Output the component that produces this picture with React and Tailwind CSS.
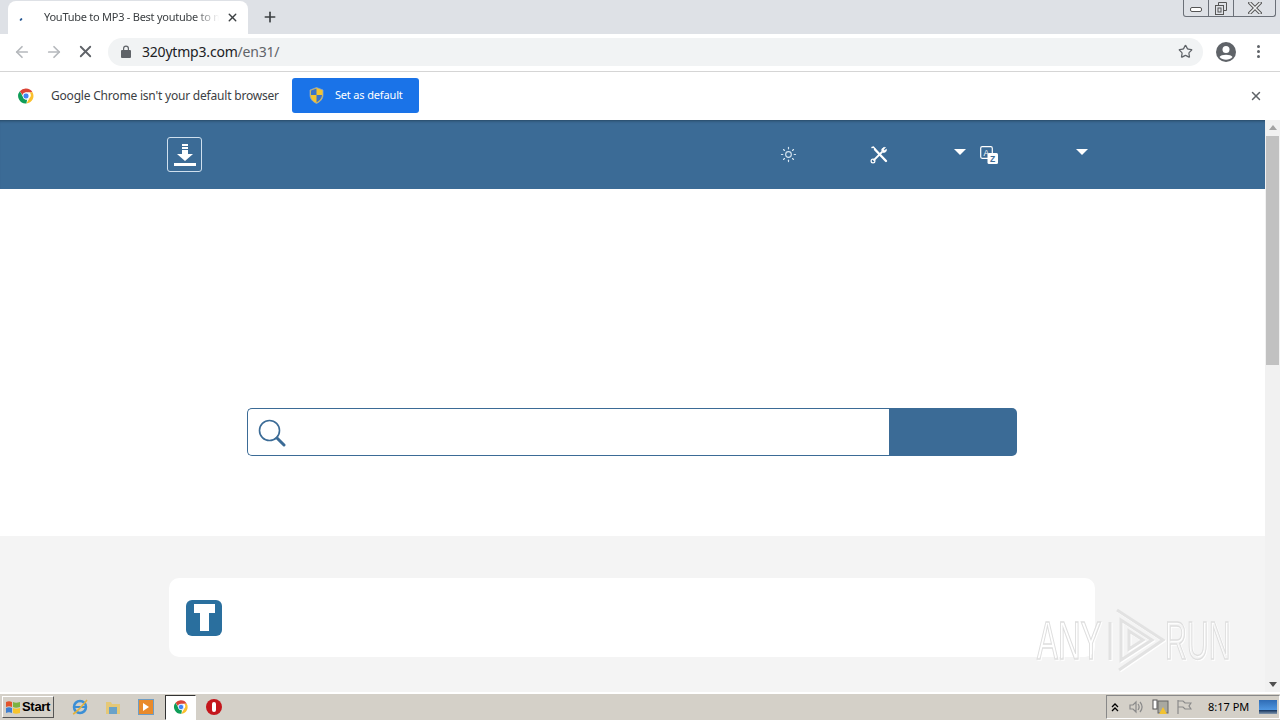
import { ArrowLeft, ArrowRight, X, Plus, Star, Sun } from "lucide-react";

function ChromeLogo({ size = 18 }) {
  return (
    <svg width={size} height={size} viewBox="0 0 48 48">
      <path d="M24 4a20 20 0 0 1 17.3 10H24a10 10 0 0 0-9.6 7.2L7.6 11.5A20 20 0 0 1 24 4z" fill="#db4437" />
      <path d="M41.3 14A20 20 0 0 1 25 44l8.5-14.5A10 10 0 0 0 33 14z" fill="#fbc02d" />
      <path d="M25 44A20 20 0 0 1 7.6 11.5L16 26a10 10 0 0 0 11 7.6z" fill="#0f9d58" />
      <circle cx="24" cy="24" r="8" fill="#4285f4" stroke="#fff" strokeWidth="2" />
    </svg>
  );
}

function Shield() {
  return (
    <svg width="15" height="17" viewBox="0 0 15 17">
      <path d="M7.5 0.5L14 3v5c0 4-3 7-6.500 8.500C4 15 1 12 1 8V3z" fill="#f4c430" stroke="#8aa4c8" strokeWidth="0.8" />
      <path d="M7.500 1.500V8H2V3.500z" fill="#3c74c8" />
      <path d="M7.500 8H13c0 3-2.500 6-5.500 7.500z" fill="#3c74c8" />
    </svg>
  );
}

function TabStrip() {
  return (
    <div className="flex h-[34px] bg-[#dee1e6]">
      <div className="ml-2 mt-[1px] flex h-[33px] w-[240px] items-center rounded-t-lg bg-white pl-[12px] pr-[8px]">
        <span className="mt-[3px] h-[3px] w-[2px] rotate-45 rounded-full bg-[#2a5a96]" />
        <span className="ml-[22px] w-[177px] overflow-hidden whitespace-nowrap text-[11px] tracking-[-0.25px] text-[#3c4043] [mask-image:linear-gradient(to_right,black_150px,transparent_175px)]">
          YouTube to MP3 - Best youtube to mp3
        </span>
        <X size={13} strokeWidth={2.5} className="ml-[5px] text-[#3c4043]" />
      </div>
      <Plus size={16} strokeWidth={2.5} className="ml-[14px] mt-[9px] text-[#3c4043]" />
      <div className="ml-auto mr-[4px] flex h-[17px] w-[93px] rounded-b-[3px] border border-t-0 border-[#6b7078] bg-[#dee1e6]">
        <div className="flex w-[25px] items-center justify-center border-r border-[#6b7078]">
          <span className="mt-[3px] h-[5px] w-[12px] rounded-[2px] border border-[#555] bg-white" />
        </div>
        <div className="flex w-[25px] items-center justify-center border-r border-[#6b7078]">
          <svg width="12" height="13" viewBox="0 0 12 13" fill="none" stroke="#555">
            <path d="M3.500 3V.5h8v8H9" />
            <rect x="0.500" y="3.500" width="8" height="9" />
            <rect x="3" y="6" width="3" height="4" />
          </svg>
        </div>
        <div className="flex flex-1 items-center justify-center">
          <svg width="14" height="12" viewBox="0 0 14 12" fill="none" strokeLinecap="square">
            <path d="M2 1l10 10M12 1L2 11" stroke="#555" strokeWidth="3.500" />
            <path d="M2 1l10 10M12 1L2 11" stroke="#eef0f2" strokeWidth="1.500" />
          </svg>
        </div>
      </div>
    </div>
  );
}

function Toolbar() {
  return (
    <div className="flex h-[38px] items-center border-b border-[#d5d5d5] bg-white pb-[2px]">
      <ArrowLeft size={18} strokeWidth={2.3} className="ml-[13px] text-[#b5b8bc]" />
      <ArrowRight size={18} strokeWidth={2.3} className="ml-[14px] text-[#b5b8bc]" />
      <X size={19} strokeWidth={2.3} className="ml-[13px] text-[#5f6368]" />
      <div className="ml-[13px] flex h-[28px] w-[1095px] items-center rounded-full bg-[#f1f3f4] pl-[12px] pr-[10px]">
        <svg width="12" height="13" viewBox="0 0 12 13" fill="#5f6368">
          <rect x="1" y="5" width="10" height="8" rx="1" />
          <path d="M3 5V3.500a3 3 0 0 1 6 0V5H7.800V3.500a1.800 1.800 0 0 0-3.600 0V5z" />
        </svg>
        <span className="ml-[10px] text-[14px] tracking-[-0.2px] text-[#202124]">
          320ytmp3.com<span className="text-[#5f6368]">/en31/</span>
        </span>
        <Star size={15} strokeWidth={2} className="ml-auto text-[#5f6368]" />
      </div>
      <svg width="20" height="20" viewBox="0 0 20 20" className="ml-[13px]">
        <circle cx="10" cy="10" r="10" fill="#5f6368" />
        <circle cx="10" cy="7.500" r="3.500" fill="#fff" />
        <path d="M3.500 15c1.500-3 11.500-3 13 0-3 3.500-10 3.500-13 0z" fill="#fff" />
      </svg>
      <div className="ml-[21px] flex flex-col gap-[2px]">
        <span className="h-[3px] w-[3px] rounded-full bg-[#5f6368]" />
        <span className="h-[3px] w-[3px] rounded-full bg-[#5f6368]" />
        <span className="h-[3px] w-[3px] rounded-full bg-[#5f6368]" />
      </div>
    </div>
  );
}

function Infobar() {
  return (
    <div className="flex h-[48px] items-center bg-white">
      <span className="ml-[17px]">
        <ChromeLogo />
      </span>
      <span className="ml-[16px] text-[12px] tracking-[-0.2px] text-[#3c4043]">Google Chrome isn't your default browser</span>
      <button className="mb-[2px] ml-[13px] flex h-[35px] w-[127px] items-center rounded-[3px] bg-[#1a73e8] pl-[17px] text-[11px] tracking-[-0.15px] text-white">
        <Shield />
        <span className="ml-[11px]">Set as default</span>
      </button>
      <X size={14} strokeWidth={2.5} className="ml-auto mr-[17px] text-[#5f6368]" />
    </div>
  );
}

function SiteHeader() {
  return (
    <header className="flex h-[69px] items-center bg-[#3b6b96] pl-[167px] shadow-[inset_0_3px_3px_-2px_rgba(0,0,0,0.35)]">
      <div className="flex h-[35px] w-[35px] flex-col items-center justify-center rounded-[3px] border border-[#cfe0ee]">
        <svg width="22" height="24" viewBox="0 0 22 24">
          <path d="M8 1h6v2H8zM8 4h6v2H8zM8 7h6v4h5l-8 7-8-7h5z" fill="#fff" />
          <rect x="0" y="20" width="22" height="3" fill="#fff" />
        </svg>
      </div>
      <Sun size={17} strokeWidth={1.6} className="ml-[578px] text-[#d6e6f2]" />
      <svg width="18" height="18" viewBox="0 0 18 18" className="ml-[73px]" fill="none" stroke="#fff" strokeLinecap="round">
        <path d="M2 1.500l1.500-.5 2 2.500" strokeWidth="1.400" />
        <path d="M5 3.500L16 15" strokeWidth="2.400" />
        <path d="M4 14L12 6" strokeWidth="1.800" />
        <circle cx="3" cy="15" r="1.900" strokeWidth="1.200" />
        <path d="M11.500 4c.5-2 2.300-3 4-2.500l-1.800 1.800.9 1.100 1.900-1.200c.4 2-1.200 3.800-3.400 3.300z" fill="#fff" strokeWidth="0.600" />
      </svg>
      <span className="mb-[5px] ml-[66px] h-0 w-0 border-x-[6px] border-t-[6px] border-x-transparent border-t-white" />
      <svg width="18" height="18" viewBox="0 0 18 18" className="ml-[14px]">
        <rect x="0.700" y="0.700" width="11.600" height="11.600" rx="1.500" fill="none" stroke="#fff" strokeWidth="1.200" />
        <text x="6.300" y="9.500" textAnchor="middle" fontSize="8.500" fontFamily="Liberation Sans, sans-serif" fill="#fff">A</text>
        <rect x="7.500" y="7" width="10.500" height="11" rx="1.500" fill="#fff" />
        <text x="12.700" y="15.800" textAnchor="middle" fontSize="8.500" fontWeight="700" fontFamily="Liberation Sans, sans-serif" fill="#3b6b96">Z</text>
      </svg>
      <span className="mb-[5px] ml-[78px] h-0 w-0 border-x-[6px] border-t-[6px] border-x-transparent border-t-white" />
    </header>
  );
}

function SearchBox() {
  return (
    <section className="flex h-[347px] items-start justify-center bg-white pt-[219px] pr-[1px]">
      <div className="flex h-[48px] w-[770px]">
        <div className="flex flex-1 items-center rounded-l-[5px] border border-r-0 border-[#3b6b96] bg-white pl-[10px]">
          <svg width="28" height="28" viewBox="0 0 28 28" fill="none" stroke="#3b6b96" className="mt-[2px]">
            <circle cx="11.500" cy="11.500" r="10" strokeWidth="1.600" />
            <path d="M19 19l7 7" strokeWidth="3" strokeLinecap="round" />
          </svg>
        </div>
        <button className="w-[128px] rounded-r-[5px] bg-[#3b6b96]" />
      </div>
    </section>
  );
}

function ToolsCard() {
  return (
    <section className="h-[156px] bg-[#f4f4f4] pl-[169px] pt-[42px]">
      <div className="flex h-[79px] w-[926px] items-center rounded-[10px] bg-white pl-[17px]">
        <div className="flex h-[36px] w-[36px] items-center justify-center rounded-[6px] bg-[#2a6f9e]">
          <svg width="21" height="27" viewBox="0 0 21 27">
            <path d="M0 0h21v9h-6v18H6V9H0z" fill="#fff" />
          </svg>
        </div>
      </div>
    </section>
  );
}

function Scrollbar() {
  return (
    <div className="flex w-[15px] flex-col items-center bg-[#f1f1f1]">
      <span className="mt-[5px] h-0 w-0 border-x-[4px] border-b-[5px] border-x-transparent border-b-[#a3a3a3]" />
      <div className="mt-[6px] h-[229px] w-full border-x border-[#f1f1f1] bg-[#c1c1c1]" />
      <span className="mb-[5px] mt-auto h-0 w-0 border-x-[4px] border-t-[5px] border-x-transparent border-t-[#505050]" />
    </div>
  );
}

function Watermark() {
  return (
    <div className="pointer-events-none absolute left-[1037px] top-[608px] flex items-center font-['Liberation_Sans',sans-serif] text-[54px] leading-none text-transparent drop-shadow-[1px_1px_0_#ffffff] [-webkit-text-stroke:1.500px_#dedede]">
      <span className="w-[68px] origin-left scale-x-[0.58]">ANY</span>
      <svg width="60" height="64" viewBox="0 0 60 64" fill="none" stroke="#e2e2e2" strokeWidth="3">
        <path d="M5 14v38M12 2l46 30-44 30" />
        <path d="M16 12v40l31-20z" />
        <path d="M24 23v18l14-9z" />
      </svg>
      <span className="w-[68px] origin-left scale-x-[0.56]">RUN</span>
    </div>
  );
}

function Taskbar() {
  return (
    <div className="flex h-[28px] items-center border-t-2 border-white bg-[#d4d0c8]">
      <button className="ml-[2px] flex h-[22px] w-[52px] items-center border border-[#555] border-l-white border-t-white bg-[#d4d0c8] pl-[2px] font-['Liberation_Sans',sans-serif] text-[13px] font-bold tracking-[-0.3px] text-black">
        <svg width="16" height="15" viewBox="0 0 16 15">
          <path d="M1 2c2-1 4-1 6 0v5c-2-1-4-1-6 0z" fill="#e2542c" />
          <path d="M8 2c2 1 4 1 7 0v5c-3 1-5 1-7 0z" fill="#7cb342" />
          <path d="M1 8c2-1 4-1 6 0v5c-2-1-4-1-6 0z" fill="#3f7fd0" />
          <path d="M8 8c2 1 4 1 7 0v5c-3 1-5 1-7 0z" fill="#f7c42c" />
        </svg>
        <span className="ml-[1px]">Start</span>
      </button>
      <svg width="18" height="18" viewBox="0 0 18 18" className="ml-[17px]">
        <circle cx="9" cy="9" r="6" fill="none" stroke="#3b8fd6" strokeWidth="2.500" />
        <rect x="4" y="8" width="11" height="2" fill="#3b8fd6" />
        <path d="M2 16C5 15 13 6 16 2" stroke="#e3b23c" strokeWidth="1.500" fill="none" />
      </svg>
      <svg width="18" height="18" viewBox="0 0 18 18" className="ml-[15px]">
        <path d="M2 4h5l1 2h8v10H2z" fill="#e5c877" />
        <rect x="5" y="9" width="8" height="7" fill="#6aa2c8" />
      </svg>
      <div className="ml-[16px] flex h-[16px] w-[16px] items-center justify-center border border-[#6d9dc5] bg-[#e98a2a]">
        <span className="h-0 w-0 border-y-[4px] border-l-[6px] border-y-transparent border-l-white" />
      </div>
      <div className="ml-[11px] flex h-[25px] w-[31px] items-center justify-center border border-[#333] border-b-white border-r-white bg-white">
        <ChromeLogo size={16} />
      </div>
      <div className="ml-[10px] flex h-[16px] w-[16px] items-center justify-center rounded-full bg-[#c4161c]">
        <span className="h-[10px] w-[4px] rounded-full bg-white" />
      </div>
      <div className="ml-auto flex h-[24px] w-[174px] items-center border border-[#888] border-b-white border-r-white">
        <svg width="8" height="9" viewBox="0 0 8 9" fill="none" stroke="#000" strokeWidth="1.300" className="ml-[4px]">
          <path d="M1 4l3-3 3 3M1 8l3-3 3 3" />
        </svg>
        <svg width="16" height="16" viewBox="0 0 16 16" className="ml-[9px]" fill="none" stroke="#8a8a8a" strokeWidth="1.200">
          <path d="M2 6h3l3-3v10l-3-3H2zM10 5c1.500 2 1.500 4 0 6M12 3c2.500 3 2.500 7 0 10" />
        </svg>
        <svg width="18" height="18" viewBox="0 0 18 18" className="ml-[7px]">
          <rect x="7" y="3" width="10" height="12" fill="#a8a8a0" stroke="#666" />
          <rect x="2" y="2" width="4" height="9" fill="#fff" stroke="#555" />
          <path d="M12 9l4 7H8z" fill="#f2c230" />
        </svg>
        <svg width="16" height="16" viewBox="0 0 16 16" className="ml-[7px]" fill="none" stroke="#8a8a8a" strokeWidth="1.200">
          <path d="M2 1v14M2 2h5l2 2h6l-2 3 2 3H9L7 8H2" />
        </svg>
        <span className="ml-[16px] text-[11px] text-black">8:17 PM</span>
        <div className="ml-auto mr-[2px] h-[14px] w-[18px] bg-[linear-gradient(to_bottom,#2f6cb5_0%,#4f96e0_70%,#1d3d66_75%,#7f95ad_100%)]" />
      </div>
    </div>
  );
}

export default function App() {
  return (
    <div className="relative flex h-[720px] w-[1280px] flex-col overflow-hidden bg-white font-['Noto_Sans',sans-serif]">
      <TabStrip />
      <Toolbar />
      <Infobar />
      <div className="flex h-[572px]">
        <div className="flex flex-1 flex-col">
          <SiteHeader />
          <SearchBox />
          <ToolsCard />
        </div>
        <Scrollbar />
      </div>
      <Taskbar />
      <Watermark />
    </div>
  );
}
